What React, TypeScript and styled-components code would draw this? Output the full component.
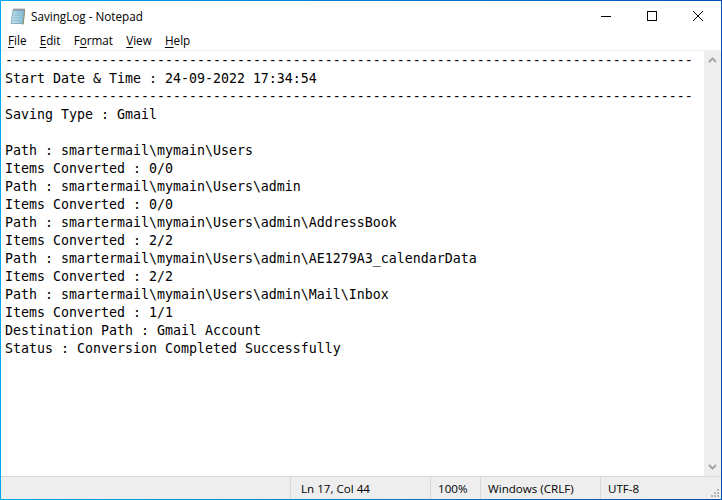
import React from "react";
import styled, { createGlobalStyle } from "styled-components";

const Global = createGlobalStyle`
  html, body { margin: 0; padding: 0; background: #fff; }
`;

const Win = styled.div`
  box-sizing: border-box;
  width: 722px;
  height: 500px;
  border: 1px solid;
  border-image: linear-gradient(to right, #00a8ee, #0078d0 55%, #0050b8) 1;
  display: flex;
  flex-direction: column;
  overflow: hidden;
  background: #fff;
  font-family: "Open Sans", "Noto Sans", sans-serif;
  color: #000;
`;

const TitleBar = styled.div`
  height: 29px;
  display: flex;
  align-items: center;
  padding-left: 8px;
`;

const Title = styled.span`
  margin-left: 4px;
  font-size: 11.7px;
  flex: 1;
`;

const Caption = styled.div`
  width: 46px;
  height: 29px;
  display: flex;
  align-items: center;
  justify-content: center;
`;

const Menu = styled.div`
  height: 20px;
  display: flex;
  align-items: center;
  padding-left: 7px;
  gap: 13.2px;
  font-size: 11.7px;
`;

const MenuItem = styled.span`
  u { text-underline-offset: 2px; }
`;

const Body = styled.div`
  flex: 1;
  display: flex;
  min-height: 0;
  border-top: 1px solid #f0f0f0;
`;

const Text = styled.pre`
  flex: 1;
  margin: 0;
  padding: 1px 0 0 4px;
  font-family: "DejaVu Sans Mono", monospace;
  font-size: 13.29px;
  line-height: 18px;
  overflow: hidden;
`;

const Scroll = styled.div`
  width: 17px;
  background: #eeeeee;
  display: flex;
  flex-direction: column;
  justify-content: space-between;
  align-items: center;
  padding: 6px 0;
  box-sizing: border-box;
`;

const Status = styled.div`
  height: 23px;
  background: #eeeeee;
  border-top: 1px solid #d7d7d7;
  display: flex;
  align-items: center;
  font-size: 11.6px;
  box-sizing: border-box;
  position: relative;
`;

const Cell = styled.div<{ $w: number; $pad: number }>`
  width: ${(p) => p.$w}px;
  box-sizing: border-box;
  height: 100%;
  border-left: 1px solid #d7d7d7;
  padding-left: ${(p) => p.$pad}px;
  display: flex;
  align-items: center;
`;

const Spacer = styled.div`
  width: 289px;
`;

const Grip = styled.svg`
  position: absolute;
  right: 2px;
  bottom: 2px;
`;

const log = `--------------------------------------------------------------------------------------
Start Date & Time : 24-09-2022 17:34:54
--------------------------------------------------------------------------------------
Saving Type : Gmail

Path : smartermail\\mymain\\Users
Items Converted : 0/0
Path : smartermail\\mymain\\Users\\admin
Items Converted : 0/0
Path : smartermail\\mymain\\Users\\admin\\AddressBook
Items Converted : 2/2
Path : smartermail\\mymain\\Users\\admin\\AE1279A3_calendarData
Items Converted : 2/2
Path : smartermail\\mymain\\Users\\admin\\Mail\\Inbox
Items Converted : 1/1
Destination Path : Gmail Account
Status : Conversion Completed Successfully`;

export default function App() {
  return (
    <Win>
      <Global />
      <TitleBar>
        <svg width="18" height="18" viewBox="0 0 18 18">
          <defs>
            <linearGradient id="pad" x1="0" y1="0" x2="1" y2="0">
              <stop offset="0" stopColor="#c4e4ee" />
              <stop offset="1" stopColor="#7fbcd6" />
            </linearGradient>
          </defs>
          <path d="M4 3h11.5L14 16.5H2z" fill="url(#pad)" stroke="#6c94a8" strokeWidth="0.7" />
          <path d="M15.7 3.5l-1.5 13.4-1 .6" fill="none" stroke="#8f8a6a" strokeWidth="1" />
          <path d="M4.5 6h9.5M4.2 8.5h9.5M3.9 11h9.5M3.6 13.5h9.5" stroke="#8fb8ca" strokeWidth="0.7" />
          <path d="M5 1.5v2M7 1.5v2M9 1.5v2M11 1.5v2M13 1.5v2M15 1.5v2" stroke="#555" strokeWidth="0.9" />
        </svg>
        <Title>SavingLog - Notepad</Title>
        <Caption>
          <svg width="10" height="10" viewBox="0 0 10 10"><path d="M0 5.5h10" stroke="#000" /></svg>
        </Caption>
        <Caption>
          <svg width="10" height="10" viewBox="0 0 10 10"><rect x="0.5" y="0.5" width="9" height="9" fill="none" stroke="#000" /></svg>
        </Caption>
        <Caption>
          <svg width="10" height="10" viewBox="0 0 10 10"><path d="M0 0l10 10M10 0L0 10" stroke="#000" /></svg>
        </Caption>
      </TitleBar>
      <Menu>
        <MenuItem><u>F</u>ile</MenuItem>
        <MenuItem><u>E</u>dit</MenuItem>
        <MenuItem>F<u>o</u>rmat</MenuItem>
        <MenuItem><u>V</u>iew</MenuItem>
        <MenuItem><u>H</u>elp</MenuItem>
      </Menu>
      <Body>
        <Text>{log}</Text>
        <Scroll>
          <svg width="9" height="6" viewBox="0 0 9 6"><path d="M1 5l3.5-3.5L8 5" fill="none" stroke="#a6a6a6" strokeWidth="2" /></svg>
          <svg width="9" height="6" viewBox="0 0 9 6"><path d="M1 1l3.5 3.5L8 1" fill="none" stroke="#a6a6a6" strokeWidth="2" /></svg>
        </Scroll>
      </Body>
      <Status>
        <Spacer />
        <Cell $w={140} $pad={10}>Ln 17, Col 44</Cell>
        <Cell $w={50} $pad={7}>100%</Cell>
        <Cell $w={120} $pad={7}>Windows (CRLF)</Cell>
        <Cell $w={120} $pad={7}>UTF-8</Cell>
        <Grip width="8" height="8" viewBox="0 0 8 8">
          <path d="M6 0h2v2H6zM3 3h2v2H3zM6 3h2v2H6zM0 6h2v2H0zM3 6h2v2H3zM6 6h2v2H6z" fill="#b5b5b5" />
        </Grip>
      </Status>
    </Win>
  );
}
